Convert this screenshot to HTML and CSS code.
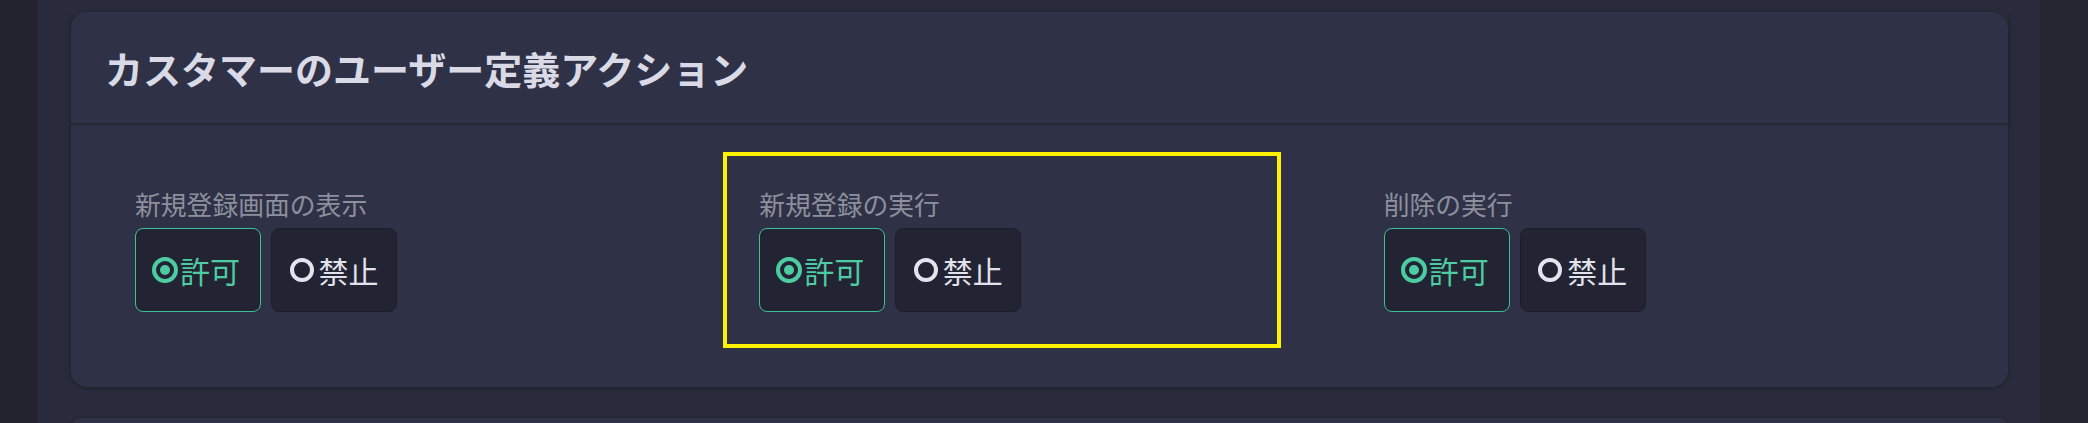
FILE: index.html
```html
<!DOCTYPE html>
<html lang="ja">
<head>
    <meta charset="UTF-8">
    <meta name="viewport" content="width=device-width, initial-scale=1.0">
    <title>カスタマーのユーザー定義アクション</title>
    <link rel="stylesheet" href="styles.css">
</head>
<body>
<div class="sidebar"></div>

<main class="content">
    <section class="card">
        <div class="card-header">
            <h2>カスタマーのユーザー定義アクション</h2>
        </div>
        <div class="card-body">
            <div class="field">
                <div class="field-label">新規登録画面の表示</div>
                <div class="choices">
                    <button class="choice active"><span class="radio"></span>許可</button>
                    <button class="choice"><span class="radio"></span>禁止</button>
                </div>
            </div>

            <div class="field highlight">
                <div class="field-label">新規登録の実行</div>
                <div class="choices">
                    <button class="choice active"><span class="radio"></span>許可</button>
                    <button class="choice"><span class="radio"></span>禁止</button>
                </div>
            </div>

            <div class="field">
                <div class="field-label">削除の実行</div>
                <div class="choices">
                    <button class="choice active"><span class="radio"></span>許可</button>
                    <button class="choice"><span class="radio"></span>禁止</button>
                </div>
            </div>
        </div>
    </section>

    <section class="card next"></section>
</main>

<div class="rightbar"></div>
</body>
</html>
```

FILE: styles.css
```css
body {
    font-family: "Noto Sans CJK JP", "Noto Sans", sans-serif;
    background-color: #23242f;
    margin: 0;
    height: 423px;
    overflow: hidden;
    display: flex;
}

.sidebar {
    width: 38px;
    background-color: #22232e;
    flex-shrink: 0;
}

.rightbar {
    width: 48px;
    background-color: #242530;
    flex-shrink: 0;
}

.content {
    flex: 1;
    background-color: #292b3c;
    padding: 12px 32px 0 33px;
    overflow: hidden;
}

.card {
    background-color: #2f3246;
    border-radius: 16px;
    box-shadow: 0 1px 4px rgba(0, 0, 0, 0.3);
}

.card.next {
    margin-top: 31px;
    height: 20px;
}

.card-header {
    height: 111px;
    padding: 0 34px;
    display: flex;
    align-items: center;
    border-bottom: 1px solid #24263a;
    box-shadow: 0 1px 2px rgba(0, 0, 0, 0.25);
}

.card-header h2 {
    margin: 0;
    font-size: 38px;
    font-weight: bold;
    color: #d9dae6;
    line-height: 1.2;
}

.card-body {
    display: grid;
    grid-template-columns: repeat(3, 1fr);
    padding: 32px 32px 43px;
}

.field {
    padding: 32px;
}

.field.highlight {
    outline: 4px solid #fff200;
    width: 550px;
    box-sizing: border-box;
}

.field-label {
    font-size: 25.8px;
    line-height: 32px;
    color: #8d8f9e;
    margin-bottom: 8px;
}

.choices {
    display: flex;
    gap: 10px;
}

.choice {
    width: 126px;
    height: 84px;
    display: flex;
    align-items: center;
    justify-content: center;
    gap: 5px;
    padding: 0;
    background-color: #232433;
    border: 1.5px solid #1d1e29;
    border-radius: 8px;
    font-family: inherit;
    font-size: 30px;
    color: #e1e2ec;
    cursor: pointer;
}

.choice.active {
    border-color: #3fbf95;
    color: #4ecca1;
    gap: 2px;
    padding-right: 4px;
}

.radio {
    width: 24px;
    height: 24px;
    box-sizing: border-box;
    border: 4px solid #e3e4ee;
    border-radius: 50%;
    position: relative;
    flex-shrink: 0;
}

.choice.active .radio {
    width: 26px;
    height: 26px;
    border: 4px solid #4ecca1;
}

.choice.active .radio::after {
    content: "";
    position: absolute;
    left: 50%;
    top: 50%;
    width: 10px;
    height: 10px;
    margin: -5px 0 0 -5px;
    border-radius: 50%;
    background-color: #4ecca1;
}
```
